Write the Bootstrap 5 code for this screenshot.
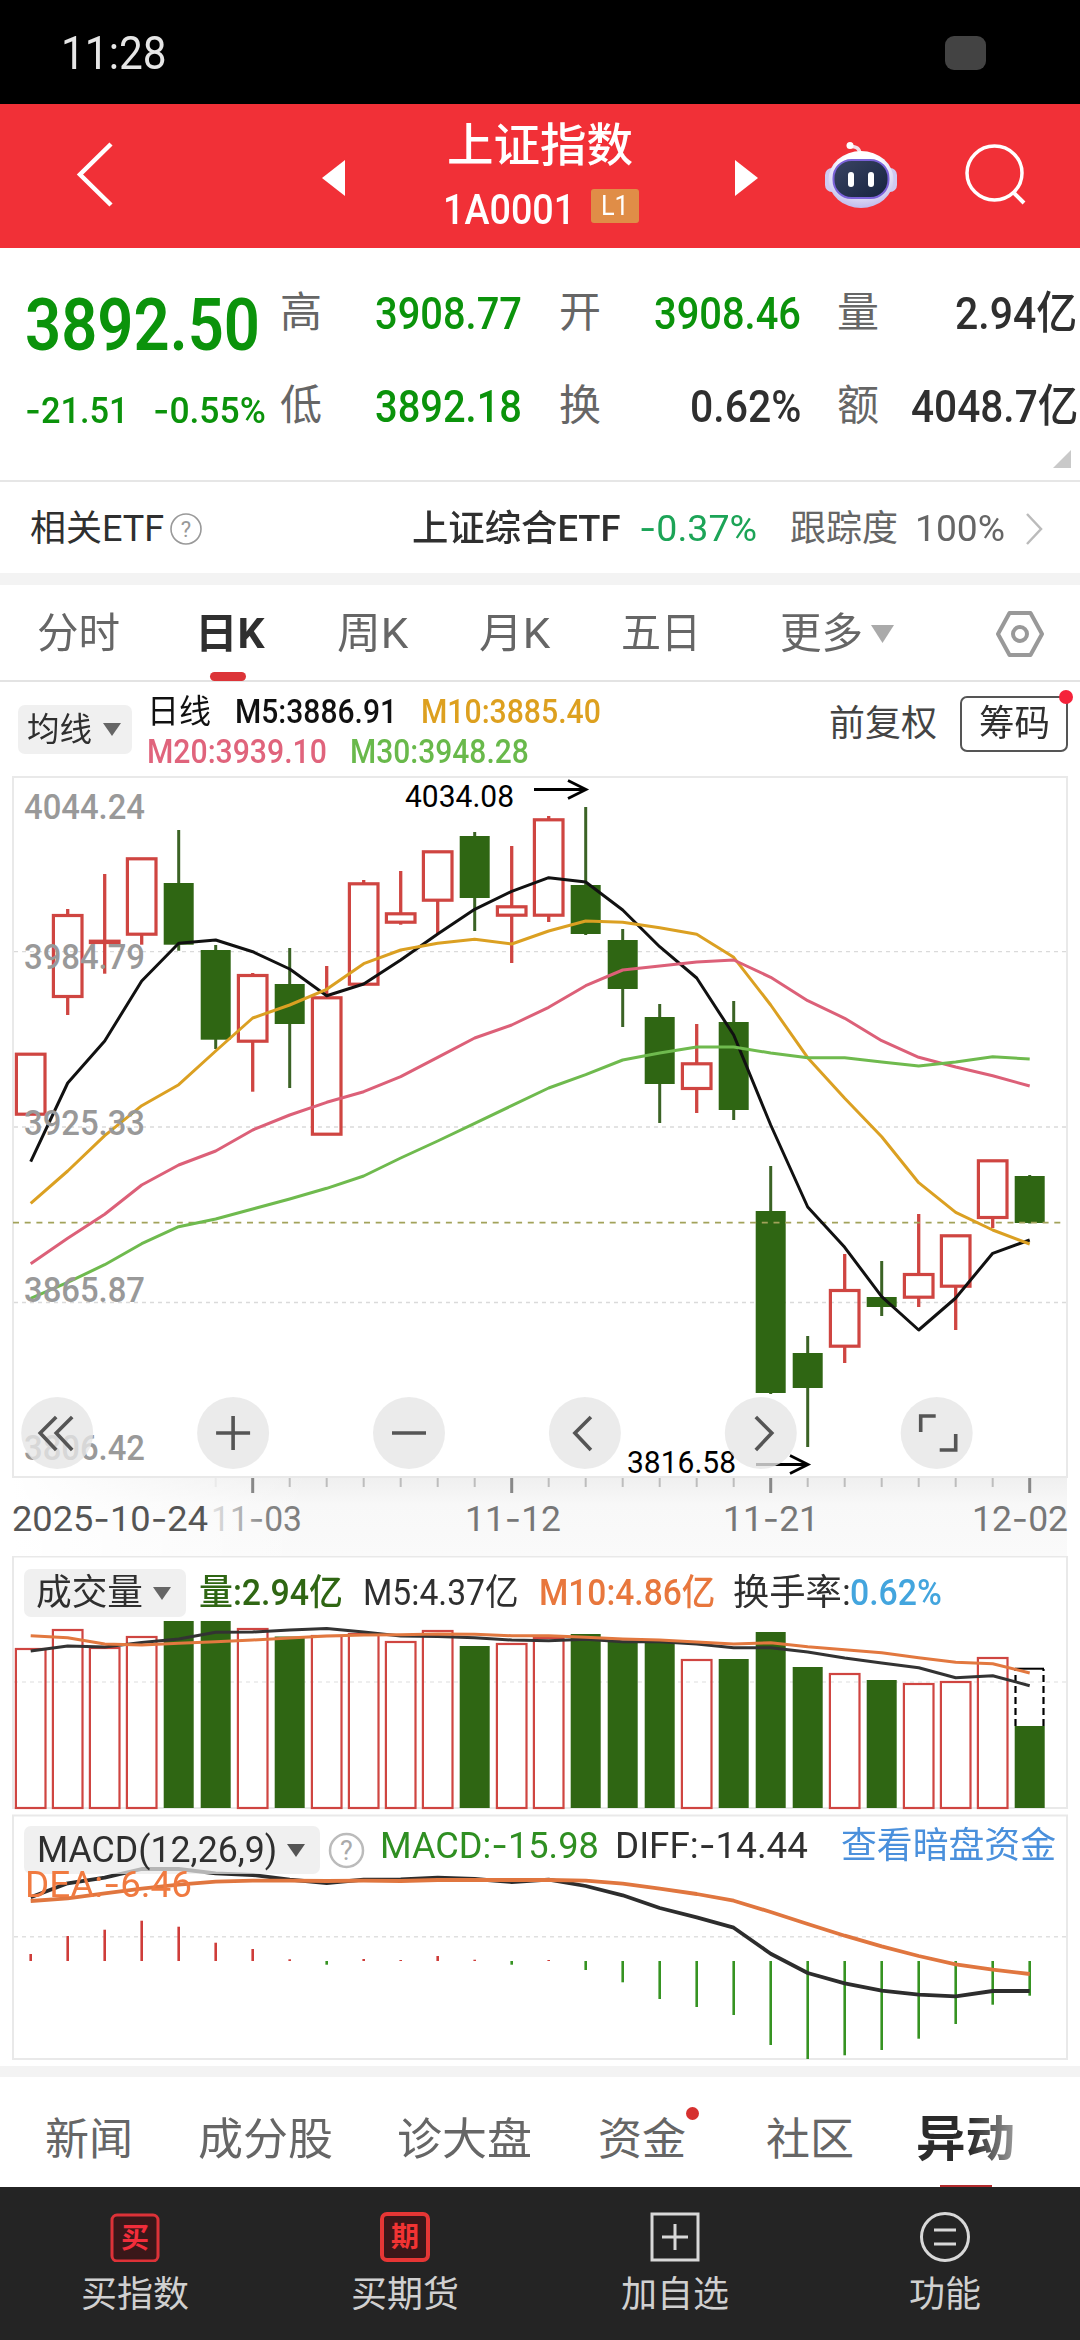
<!DOCTYPE html>
<html lang="zh-CN">
<head>
<meta charset="utf-8">
<meta name="viewport" content="width=device-width, initial-scale=1">
<title>上证指数</title>
<link href="https://cdn.jsdelivr.net/npm/bootstrap@5.3.0/dist/css/bootstrap.min.css" rel="stylesheet">
<style>
:root{--up:#cf4541;--down:#2f6613;--gain:#0b930b}
body{width:1080px;margin:0;overflow-x:hidden;background:#fff;color:#2f2f2f;font-family:Roboto,"Noto Sans CJK SC",sans-serif;line-height:1;font-size:36px}
svg{display:block}
svg text{font-family:Roboto,"Noto Sans CJK SC",sans-serif}
[data-w]{display:inline-block;white-space:nowrap;transform-origin:0 50%;justify-self:start}
.hy{font-family:Inter,sans-serif}
.fw-m{font-weight:500}
.statusbar{height:104px;background:#000;color:#e6e6e6;font-size:46px;padding:2px 61px 0}
.notch{width:41px;height:34px;border-radius:9px;background:#434343;margin-right:33px}
.topbar{height:144px;background:#f13037;color:#fff;display:grid;grid-template-columns:322px 113px 300px 89px 141px 1fr;align-items:center}
.topbar svg{margin-bottom:2px}
.topbar .tri{margin-top:5px}
.topbar .ttl{font-size:46px;height:52px;line-height:48px}
.topbar .code{font-size:42px;font-weight:500}
.lv{width:48px;height:34px;background:#e08d47;font-size:28px;border-radius:3px}
.quote{height:234px;display:grid;grid-template-columns:255px 95px 184px 95px 183px 70px 1fr;padding-left:25px;padding-top:36px;grid-template-rows:93px 93px;position:relative;border-bottom:2px solid #e6e6e6}
.quote .k{font-size:42px;color:#666;line-height:57px}
.quote .v{font-size:45px;line-height:59px;font-weight:500}
.quote .big{font-size:73px;line-height:83px;font-weight:600}
.quote .chg{font-size:37px;line-height:65px;font-weight:500}
.gain{color:var(--gain)}
.corner{right:9px;bottom:12px}
.etf{height:91px;display:grid;grid-template-columns:139px 243px 227px 151px 125px 110px 1fr;padding-left:30px;padding-top:2px;align-items:center}
.gapbar{height:12px;background:#f3f3f3}
.ktabs{height:97px;display:grid;grid-template-columns:158px 142px 142px 142px 159px 91px 124px 1fr;padding-left:37px;padding-top:2px;align-items:center;font-size:42px;color:#666;border-bottom:2px solid #e3e3e3;position:relative}
.ktabs .on{color:#2f2f2f}
.ktabs .bar{left:210px;bottom:-1px;width:36px;height:9px;border-radius:5px;background:#dc3438}
.indic{height:93px;display:grid;grid-template-columns:129px 682px 131px 108px;padding-left:18px;align-items:center}
.pick{background:#f0f0f0;border-radius:7px;color:#2f2f2f}
.indic .pick{width:114px;height:49px;font-size:33px;padding-left:9px;gap:11px;margin-top:1px}
.indic .adj{margin-top:-10px}
.ma{display:grid;font-size:33px;grid-template-rows:40px 40px;line-height:40px;color:#111;padding-top:6px}
.ma div{display:grid;grid-template-columns:88px 186px 1fr}
.ma div+div{grid-template-columns:203px 1fr}
.chip{width:108px;height:56px;border:2px solid #555;border-radius:7px;position:relative;padding-left:17px;margin-top:-10px}
.reddot{width:14px;height:14px;border-radius:50%;background:#f5223a;position:absolute}
.plot{position:relative}
.legend1,.legend2{position:absolute;left:0;width:1080px;display:grid;align-items:center}
.legend1{top:12px;height:50px;padding-left:24px;grid-template-columns:175px 164px 176px 194px 117px 1fr;font-size:36px}
.legend2{top:12px;height:48px;padding-left:24px;grid-template-columns:304px 52px 235px 226px 1fr;font-size:36px}
.legend2>span{margin-top:-9px}
.legend1 .pick{width:162px;height:48px;padding-left:12px;gap:10px}
.legend2 .pick{width:296px;height:48px;padding-left:13px;gap:10px;background:#eaeaeab8}
.dea{position:absolute;left:25px;top:52px;color:#f07a40;font-size:36px}
.ntabs{height:110px;display:grid;grid-template-columns:153px 199px 201px 168px 150px 1fr;padding-left:45px;padding-top:15px;align-items:center;font-size:44px;color:#666;position:relative}
.ntabs .cur{font-size:49px;font-weight:700;background:linear-gradient(90deg,#2b2b2b 55%,#999);-webkit-background-clip:text;background-clip:text;color:transparent;line-height:64px}
.ntabs .bar{left:940px;bottom:0;width:52px;height:2px;background:#b32a2c}
.bnav{height:153px;background:#242424;color:#d0d0d0;font-size:36px}
.bnav .ic{height:50px;margin-top:25px;margin-bottom:15px}
</style>
</head>
<body>
<div class="statusbar d-flex align-items-center justify-content-between"><span data-w="106">11:28</span><span class="notch"></span></div>

<header class="topbar">
  <svg width="120" height="70" viewBox="0 0 120 70"><path d="M111 4 80 34.500 111 65" fill="none" stroke="#fff" stroke-width="4.500"/></svg>
  <svg class="tri" width="24" height="38" viewBox="0 0 24 38"><path d="M0 19 23 1V37Z" fill="#fff"/></svg>
  <div>
    <div class="ttl ps-2 ms-1"><span class="fw-m" data-w="186">上证指数</span></div>
    <div class="d-flex align-items-center ps-2 mt-2"><span class="code pt-2" data-w="132">1A0001</span><span class="lv ms-3 d-flex align-items-center justify-content-center"><span data-w="28">L1</span></span></div>
  </div>
  <svg class="tri" width="24" height="38" viewBox="0 0 24 38"><path d="M0 1 23 19 0 37Z" fill="#fff"/></svg>
  <svg width="74" height="68" viewBox="0 0 74 68">
    <defs><radialGradient id="hd" cx=".5" cy=".3" r=".75"><stop offset=".4" stop-color="#fff"/><stop offset="1" stop-color="#b9b3ea"/></radialGradient><linearGradient id="fc" x1="0" y1="0" x2="1" y2="1"><stop offset="0" stop-color="#3a4462"/><stop offset="1" stop-color="#16233f"/></linearGradient></defs>
    <path d="M36 14C36 7 33 6 25 5" fill="none" stroke="#f1dfe9" stroke-width="3.500" stroke-linecap="round"/><circle cx="26" cy="4.500" r="3.500" fill="#fff"/>
    <rect x="1" y="27" width="14" height="24" rx="7" fill="#cfcaf2"/><rect x="59" y="27" width="14" height="24" rx="7" fill="#cfcaf2"/>
    <ellipse cx="37" cy="38.500" rx="32.500" ry="28.500" fill="url(#hd)"/>
    <rect x="9.500" y="19" width="55" height="38" rx="18" fill="url(#fc)" stroke="#7b62d8" stroke-width="2"/>
    <rect x="24" y="31" width="6" height="15" rx="3" fill="#fff"/><rect x="44" y="31" width="6" height="15" rx="3" fill="#fff"/>
  </svg>
  <svg width="64" height="64" viewBox="0 0 64 64"><ellipse cx="29.500" cy="30" rx="27.500" ry="27" fill="none" stroke="#fff" stroke-width="3.500"/><path d="m48 49 11 11" stroke="#fff" stroke-width="4"/></svg>
</header>

<section class="quote">
  <span class="big gain" data-w="235">3892.50</span><span class="k">高</span><span class="v gain" data-w="147">3908.77</span><span class="k">开</span><span class="v gain" data-w="147">3908.46</span><span class="k">量</span><div class="ps-5"><span class="v" data-w="122">2.94亿</span></div>
  <div class="d-flex gain chg"><span data-w="104">-21.51</span><span style="margin-left:24px" data-w="113">-0.55%</span></div><span class="k">低</span><span class="v gain" data-w="147">3892.18</span><span class="k">换</span><div class="ps-4 ms-2"><span class="v ms-1" data-w="111">0.62%</span></div><span class="k">额</span><div class="ps-1"><span class="v" data-w="167">4048.7亿</span></div>
  <svg class="corner position-absolute" width="18" height="18"><path d="M18 0V18H0Z" fill="#c9c9c9"/></svg>
</section>

<section class="etf">
  <span data-w="134">相关ETF</span>
  <svg width="34" height="34" viewBox="0 0 34 34"><circle cx="17" cy="17" r="15" fill="none" stroke="#999" stroke-width="1.600"/><text x="17" y="25" font-size="22" text-anchor="middle" fill="#999">?</text></svg>
  <span class="fw-m" data-w="208">上证综合ETF</span><span data-w="118" style="color:#1ca457">-0.37%</span><span data-w="108" style="color:#666">跟踪度</span><span data-w="90" style="color:#666">100%</span>
  <svg width="18" height="36" viewBox="0 0 18 36"><path d="M2 3 16 18 2 33" fill="none" stroke="#bbb" stroke-width="2.500"/></svg>
</section>
<div class="gapbar"></div>

<nav class="ktabs">
  <span data-w="83">分时</span><span class="on fw-bold" data-w="70">日K</span><span data-w="71">周K</span><span data-w="71">月K</span><span data-w="80">五日</span><span data-w="83">更多</span>
  <svg width="23" height="18"><path d="M0 0H23L11.500 18Z" fill="#aaa"/></svg>
  <svg width="50" height="48" viewBox="0 0 50 48"><path d="M14.500 3H35.500L47 24 35.500 45H14.500L3 24Z" fill="none" stroke="#999" stroke-width="4" stroke-linejoin="round"/><circle cx="25" cy="24" r="7" fill="none" stroke="#999" stroke-width="4"/></svg>
  <i class="bar position-absolute"></i>
</nav>

<section class="indic">
  <div class="pick d-flex align-items-center"><span data-w="65">均线</span><svg width="18" height="13"><path d="M0 0H18L9 13Z" fill="#666"/></svg></div>
  <div class="ma"><div><span data-w="64">日线</span><span data-w="162" class="fw-m">M5:3886.91</span><span data-w="180" class="fw-m" style="color:#dda01f">M10:3885.40</span></div><div><span data-w="180" class="fw-m" style="color:#e0647c">M20:3939.10</span><span data-w="179" class="fw-m" style="color:#69b94b">M30:3948.28</span></div></div>
  <span class="adj" data-w="108" style="color:#444">前复权</span>
  <div class="chip d-flex align-items-center"><span data-w="71">筹码</span><i class="reddot" style="right:-7px;top:-8px"></i></div>
</section>

<div class="plot"><svg id="kline" width="1080" height="781" viewBox="0 775 1080 781"></svg></div>
<div class="plot"><svg id="vol" width="1080" height="258" viewBox="0 1556 1080 258"></svg>
  <div class="legend1">
    <div class="pick d-flex align-items-center"><span data-w="107">成交量</span><svg width="18" height="13"><path d="M0 0H18L9 13Z" fill="#666"/></svg></div>
    <span class="fw-m" data-w="144" style="color:#2f6613">量:2.94亿</span><span data-w="156">M5:4.37亿</span><span data-w="176" class="fw-m" style="color:#e8773d">M10:4.86亿</span><span data-w="118">换手率:</span><span data-w="92" style="color:#43a5de" class="fw-m">0.62%</span>
  </div>
</div>
<div class="plot"><svg id="macd" width="1080" height="252" viewBox="0 1814 1080 252"></svg>
  <div class="legend2">
    <div class="pick d-flex align-items-center"><span data-w="240">MACD(12,26,9)</span><svg width="18" height="13"><path d="M0 0H18L9 13Z" fill="#555"/></svg></div>
    <svg width="37" height="37" viewBox="0 0 37 37"><circle cx="18.500" cy="18.500" r="16.500" fill="none" stroke="#bbb" stroke-width="2.500"/><text x="18.500" y="28" font-size="27" text-anchor="middle" fill="#aaa">?</text></svg>
    <span data-w="219" style="color:#2f8f22">MACD:-15.98</span><span data-w="193">DIFF:-14.44</span><span data-w="215" style="color:#4a90dc">查看暗盘资金</span>
  </div>
  <span class="dea" data-w="167">DEA:-6.46</span>
</div>
<div class="gapbar" style="height:11px"></div>

<nav class="ntabs">
  <span data-w="88">新闻</span><span data-w="135">成分股</span><span data-w="135">诊大盘</span><span data-w="88">资金</span><span data-w="88">社区</span><span class="cur" data-w="99">异动</span>
  <i class="reddot" style="left:686px;top:30px;width:13px;height:13px;background:#d6312f"></i><i class="bar position-absolute"></i>
</nav>
<nav class="bnav row g-0 text-center">
  <div class="col"><svg class="ic mx-auto" width="50" height="50" viewBox="0 0 50 50"><rect x="2" y="3" width="46" height="46" rx="5" fill="#3a1719" stroke="#dd3238" stroke-width="3"/><text x="25" y="36" font-size="28" font-weight="700" text-anchor="middle" fill="#f22d3b">买</text></svg><span>买指数</span></div>
  <div class="col"><svg class="ic mx-auto" width="50" height="50" viewBox="0 0 50 50"><rect x="2" y="2" width="46" height="46" rx="5" fill="#3a1719" stroke="#e63635" stroke-width="4"/><text x="25" y="35" font-size="28" font-weight="700" text-anchor="middle" fill="#f23333">期</text></svg><span>买期货</span></div>
  <div class="col"><svg class="ic mx-auto" width="50" height="50" viewBox="0 0 50 50"><path d="M2 2H48V48H2ZM25 12V38M12 25H38" fill="none" stroke="#d8d8d8" stroke-width="3"/></svg><span>加自选</span></div>
  <div class="col"><svg class="ic mx-auto" width="52" height="50" viewBox="0 0 52 50"><circle cx="26" cy="25" r="23.500" fill="none" stroke="#d8d8d8" stroke-width="3"/><path d="M15 18H37M15 32H37" stroke="#d8d8d8" stroke-width="3"/></svg><span>功能</span></div>
</nav>

<script src="https://cdn.jsdelivr.net/npm/bootstrap@5.3.0/dist/js/bootstrap.bundle.min.js"></script>
<script>
const X = i => 30.7 + i * 37;
const UP = '#cf4541', DN = '#2f6613';
const line = (a, c, w = 3) => `<polyline fill="none" stroke="${c}" stroke-width="${w}" stroke-linejoin="round" points="${a.map((y, i) => X(i) + ',' + y).join(' ')}"/>`;
const seg = (x1, y1, x2, y2, c, w, e = '') => `<path d="M${x1} ${y1}L${x2} ${y2}" stroke="${c}" stroke-width="${w}" ${e}/>`;
const dash = (s) => s.replace(/-/g, '<tspan class="hy">-</tspan>');
const txt = (x, y, w, size, c, s, e = '') => `<text x="${x}" y="${y}" textLength="${w}" lengthAdjust="spacingAndGlyphs" font-size="${size}" fill="${c}" ${e}>${dash(s)}</text>`;
const box = (y1, y2) => `<rect x="13" y="${y1}" width="1054" height="${y2 - y1}" fill="none" stroke="#e9e9e9" stroke-width="2"/>`;

// colour, body top, body bottom, high, low
const K = [
 ['r',1052.7,1115.7,1053,1115],['r',914,998,909,1015],['r',939.7,944,874,973.7],['r',857.3,935.7,858,944.7],
 ['g',883,944.7,830,950.7],['g',950,1039.7,945,1049],['r',974,1042.7,973,1091.7],['g',984,1024,948,1088],
 ['r',996.3,1135.7,966,1135],['r',882.3,985.7,880,985],['r',912.3,923.7,871,924.7],['r',850.3,901.7,851,933.7],
 ['g',836,898,832,931],['r',905.3,916.7,846,963],['r',818.3,916.7,816,922],['g',885,934,807,935],
 ['g',940,989,929,1027],['g',1017,1084,1004,1123],['r',1062.3,1090,1024,1113],['g',1022,1110,1001,1120],
 ['g',1211,1393,1166,1394],['g',1353,1388,1336,1447],['r',1289,1347.7,1254,1363],['g',1297,1307,1261,1316],
 ['r',1273,1298.7,1214,1307],['r',1234.3,1287.7,1235,1330],['r',1159.3,1219,1160,1228],['g',1176,1223,1175,1223.5]];
const MA5 = [1161.7,1083,1041,981,943.3,940,951.7,969,995.7,984,960,934,909.3,891.3,877.7,882,910,946.7,978,1035,1125,1207,1247.3,1296.7,1330,1298,1253.3,1240];
const MA10 = [1203.3,1171,1135.7,1105.7,1084.7,1051,1018,1005,989.3,963.7,950,943.3,939.3,944,931,921,922.3,927.7,934.3,957.3,1005,1057.7,1098.3,1136.7,1182.7,1212.3,1230,1244];
const MA20 = [1263.7,1238.3,1214.3,1185,1165,1151,1130,1115,1102.3,1091.7,1076.7,1057.3,1038,1025,1007.3,985.7,970,966,962,960,977.3,1000.7,1018.3,1040.7,1057.3,1067,1075.7,1086];
const MA30 = [1298.3,1282.3,1264.7,1243.7,1226.7,1219,1209,1199,1188.3,1176,1158,1141,1123.3,1105.7,1088,1074.7,1060,1053,1047,1047,1053,1057.7,1057.7,1062,1066,1062,1056.7,1059];

let s = `<defs><linearGradient id="ax" x1="0" y1="0" x2="0" y2="1"><stop offset="0" stop-color="#efefef"/><stop offset=".35" stop-color="#f8f8f8"/><stop offset="1" stop-color="#fafafa"/></linearGradient>
<linearGradient id="fade"><stop offset="0" stop-color="#fff"/><stop offset="1" stop-color="#fff" stop-opacity="0"/></linearGradient>
<linearGradient id="tf"><stop offset="0" stop-color="#e6e6e6"/><stop offset=".6" stop-color="#858585"/><stop offset="1" stop-color="#7d7d7d"/></linearGradient></defs>
<rect x="13" y="1477" width="1054" height="79" fill="url(#ax)"/><rect x="12" y="1477" width="300" height="79" fill="url(#fade)"/>` + box(777, 1477);
for (const y of [951.7, 1127, 1302.5]) s += seg(14, y, 1066, y, '#dadada', 1.3, 'stroke-dasharray="4 4"');
K.forEach(([c, t, b, h, l], i) => {
  const x = X(i);
  if (c === 'g') s += seg(x, h, x, l, '#3b6325', 3) + `<rect x="${x - 15}" y="${t}" width="30" height="${b - t}" fill="${DN}"/>`;
  else s += (h < t ? seg(x, h, x, t + 1, UP, 3.3) : '') + (l > b ? seg(x, b - 1, x, l, UP, 3.3) : '') +
    `<rect x="${x - 14.3}" y="${t + 1.5}" width="28.6" height="${b - t - 3}" fill="none" stroke="${UP}" stroke-width="3.200"/>`;
});
s += seg(13, 1222.7, 1066, 1222.7, '#a2a25a', 1.7, 'stroke-dasharray="6 5.7"');
s += line(MA5, '#111') + line(MA10, '#dba022') + line(MA20, '#dc6078') + line(MA30, '#6fba4e');
[['4044.24',819],['3984.79',969],['3925.33',1135],['3865.87',1302],['3806.42',1460]].forEach(([t, y]) => s += txt(24, y, 121, 35, '#999', t, 'font-weight="500"'));
s += txt(405, 806.7, 109, 31, '#000', '4034.08') + txt(627, 1473, 109, 31, '#000', '3816.58');
for (const [x, y] of [[586, 789.5], [808, 1464.5]]) s += `<path d="M${x - 52} ${y}H${x - 1}M${x - 18} ${y - 9}L${x} ${y}L${x - 18} ${y + 9}" fill="none" stroke="#000" stroke-width="2.800"/>`;
const icons = ['M-1 -16 -17 0 -1 17M15 -16 -1 0 15 17','M-17 0H17M0 -17V17','M-17 0H17','M6 -16 -10 0 6 17','M-5 -16 11 0 -5 17','M-16 -1V-17H-1M19 1V17H3'];
icons.forEach((d, i) => s += `<g transform="translate(${57.2 + i * 175.9} 1433)"><circle r="36" fill="#e6e6e6" fill-opacity=".8"/><path d="${d}" fill="none" stroke="#555" stroke-width="3.600"/></g>`);
for (let i = 5; i < 28; i++) { const M = i % 7 === 6; s += seg(X(i), 1478, X(i), M ? 1493 : 1487, i === 5 ? '#eaeaea' : M ? '#888' : '#bdbdbd', M ? 3 : 2); }
s += txt(12, 1531, 196, 35, '#555', '2025-10-24') + txt(211, 1531, 91, 35, 'url(#tf)', '11-03') + txt(465, 1531, 96, 35, '#777', '11-12') + txt(723, 1531, 96, 35, '#777', '11-21') + txt(972, 1531, 96, 35, '#777', '12-02');
document.getElementById('kline').innerHTML = s;

// volume bars: tops, with the colour of each day's candle
const V = [1648,1629,1647,1636,1621,1621,1628,1636.5,1635,1633,1641,1630,1646,1643,1637,1634,1641,1641,1659,1659,1632,1667,1673,1680,1683,1681,1657,1726];
const V5 = [1651,1646,1647,1642.5,1639,1632.3,1632,1630,1628.5,1632,1636,1636.5,1637.7,1640,1640.7,1639.3,1641.7,1641.7,1644,1647.7,1647.7,1652,1658,1663,1667.7,1677.7,1675.7,1685.7];
const V10 = [1635.7,1637.7,1644,1645,1643.3,1641.7,1640,1638,1636,1635,1634.7,1634,1634.3,1635.7,1635.7,1637.3,1639,1640,1642,1644,1642.7,1646.7,1649.7,1652.7,1657.7,1662.3,1663.7,1673];
s = box(1556.5, 1808) + seg(14, 1682, 1066, 1682, '#dedede', 1.2, 'stroke-dasharray="4 4"');
V.forEach((t, i) => { const x = X(i); s += K[i][0] === 'g' ? `<rect x="${x - 15}" y="${t}" width="30" height="${1808 - t}" fill="${DN}"/>` : `<rect x="${x - 14.8}" y="${t + 1}" width="29.6" height="${1807 - t}" fill="none" stroke="${UP}" stroke-width="2.200"/>`; });
s += '<path d="M1015.500 1726V1669M1043.500 1726V1669" fill="none" stroke="#000" stroke-width="2.200" stroke-dasharray="7 4"/><path d="M1015 1668.700H1044" stroke="#000" stroke-width="2"/>';
s += line(V5, '#333') + line(V10, '#e2783f');
document.getElementById('vol').innerHTML = s;

const H = [1954,1936,1929.7,1920.7,1926.7,1942.7,1949,1959.3,1964.7,1959,1960,1956,1959.7,1964.7,1960,1970,1982.3,1999,2007,2015,2045,2059,2055.3,2050,2038.7,2024,2004.7,1995.7];
const DIFF = [1897.3,1883.3,1877.7,1869,1869,1873.3,1875,1879.7,1883,1879.7,1879.3,1877.7,1879,1882,1879.7,1886,1895.3,1908,1917.3,1927.7,1953.7,1973,1983.3,1990.7,1994.7,1996.3,1991,1991];
const DEA = [1901,1898.3,1893.3,1888.7,1884.7,1881.7,1880.7,1880.7,1881,1880.7,1881,1880,1880,1880,1880,1880.7,1883.7,1888.7,1894,1900.7,1912,1924,1935.7,1946.3,1956,1964.3,1969.7,1974];
s = box(1815.5, 2059) + seg(14, 1936.7, 1066, 1936.7, '#e0e0e0', 1.4, 'stroke-dasharray="4 4"');
H.forEach((y, i) => s += seg(X(i), 1961, X(i), y, y < 1961 ? '#cf3d3a' : '#369322', 2.6));
s += line(DIFF, '#2d2d2d', 3.8) + line(DEA, '#e0763f', 3.8);
document.getElementById('macd').innerHTML = s;

document.querySelectorAll('[data-w]').forEach(el => {
  el.innerHTML = el.innerHTML.replace(/-/g, '<span class="hy">-</span>');
  const w = +el.dataset.w, n = el.offsetWidth;
  el.style.transform = `scaleX(${w / n})`;
  if (!el.classList.contains('dea')) el.style.marginRight = (w - n) + 'px';
});
</script>
</body>
</html>
